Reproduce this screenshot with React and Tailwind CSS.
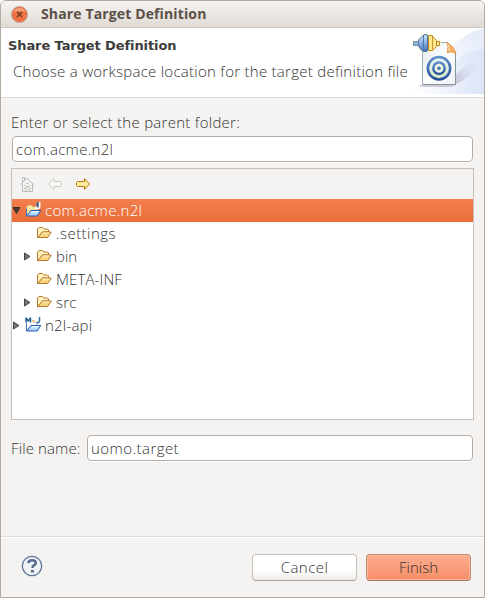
const BODY = "font-['Open_Sans','Noto_Sans',sans-serif] font-light text-[15px] text-[#333] whitespace-nowrap";

function Folder() {
  return (
    <svg width="16" height="16" viewBox="0 0 16 16" className="shrink-0" strokeLinejoin="round">
      <path d="M1.500 12.500V4L3 2.500h3.500L8 4h3.500l1 1v2H6.500L2 12.500z" fill="#fff0bd" stroke="#b5792b" />
      <path d="M1.800 12.500L6.300 7h9l-3.600 5.500z" fill="#f8d581" stroke="#b5792b" />
      <path d="M6.500 8h7" stroke="#fff3cc" />
    </svg>
  );
}

function Project({ maven }) {
  return (
    <svg width="17" height="17" viewBox="0 0 17 17" className="shrink-0" strokeLinejoin="round">
      <path d="M1.500 13.500V5.500L3 3.500h3.500L8 5h4v4H7l-5 4.500z" fill={maven ? "#fff" : "#fbe3a0"} stroke={maven ? "#9aa9c2" : "#e3c48a"} />
      <path d="M1.500 6.500v7.500" stroke="#3c6ebd" />
      <path d="M1.800 14L5.800 8.500h10l-3.500 5.500z" fill="#a9d0fb" stroke="#2d5fb0" />
      <path d="M6.500 9.500h7.500M5.500 10.800h7" stroke="#e5f3ff" />
      {maven ? (
        <>
          <path d="M0 0h17v5.500H0z" fill="#fff" />
          <path d="M1 5.500V1L3.300 4l2.200-3v4.500" fill="none" stroke="#235e93" strokeWidth="1.500" />
          <path d="M7.500 3l2.500 2.500" stroke="#d7b469" strokeWidth="1.700" />
          <path d="M14.500 0v4.200q0 1.300-1.300 1.300h-1.900" fill="none" stroke="#3a70a4" strokeWidth="1.500" />
        </>
      ) : (
        <>
          <path d="M12 0h2v5h-3V4z" fill="#4d6c9c" />
          <path d="M14.700 0v5q0 1.500-1.500 1.500h-2V4.500" fill="none" stroke="#fff" strokeWidth="1.600" />
        </>
      )}
    </svg>
  );
}

function Expander({ open }) {
  return (
    <svg width="9" height="9" viewBox="0 0 9 9" className="shrink-0">
      {open ? <path d="M1 1.500h7L4.500 7.500z" fill="#503b32" stroke="#38312d" /> : <path d="M1.500 1v7L7 4.500z" fill="#777" stroke="#444" />}
    </svg>
  );
}

function Row({ pad, icon, expander, selected, spacing, children }) {
  return (
    <div className={`flex h-[23px] items-center ${pad} ${selected ? "bg-gradient-to-b from-[#f37e4e] to-[#ea6d3a]" : ""}`}>
      <div className="flex w-[13px] shrink-0 pb-px">{expander && <Expander open={expander === "open"} />}</div>
      <div className="flex w-[20px] shrink-0 pb-px">{icon}</div>
      <span className={`${BODY} ${spacing} ${selected ? "text-white!" : ""}`}>{children}</span>
    </div>
  );
}

function Banner() {
  return (
    <svg width="78" height="66" viewBox="406 28 78 66" className="shrink-0">
      <defs>
        <linearGradient id="sweep" gradientUnits="userSpaceOnUse" x1="436" y1="75" x2="484" y2="50">
          <stop offset="0" stopColor="#fff" />
          <stop offset="1" stopColor="#e6ecfa" />
        </linearGradient>
        <linearGradient id="lower" gradientUnits="userSpaceOnUse" x1="412" y1="0" x2="484" y2="0">
          <stop offset="0" stopColor="#fff" />
          <stop offset="1" stopColor="#dbe4f7" />
        </linearGradient>
        <linearGradient id="page" x1="0" y1="0" x2="1" y2="1">
          <stop offset="0" stopColor="#dfe6e9" />
          <stop offset="0.5" stopColor="#fff" />
          <stop offset="1" stopColor="#edf0f6" />
        </linearGradient>
        <linearGradient id="shade" gradientUnits="userSpaceOnUse" x1="454" y1="84" x2="480" y2="64">
          <stop offset="0" stopColor="#aaa4bd" stopOpacity="0.6" />
          <stop offset="1" stopColor="#d3d5e8" stopOpacity="0" />
        </linearGradient>
        <linearGradient id="ring" x1="0" y1="0" x2="0" y2="1">
          <stop offset="0" stopColor="#5f8dc9" />
          <stop offset="1" stopColor="#234f9b" />
        </linearGradient>
        <linearGradient id="disc" x1="0" y1="0" x2="0" y2="1">
          <stop offset="0" stopColor="#e6f2ff" />
          <stop offset="1" stopColor="#d2e8bd" />
        </linearGradient>
        <linearGradient id="steel" x1="0" y1="0" x2="0" y2="1">
          <stop offset="0" stopColor="#d8eafa" />
          <stop offset="0.5" stopColor="#8ab0e0" />
          <stop offset="1" stopColor="#446fb0" />
        </linearGradient>
      </defs>
      <path d="M484 28q-17 4-30 16l-12 50h42z" fill="url(#sweep)" />
      <path d="M484 49q-18 1-30 14l-46 31h76z" fill="url(#lower)" />
      <path d="M456 84V74q12-11 27-18-8 20-27 28z" fill="url(#shade)" />
      <path d="M418 85h37l-3 2h-30z" fill="#bdb7c4" opacity="0.7" />
      <path d="M422.500 42.500h25l8 10v32h-33z" fill="url(#page)" stroke="#9ab0b6" />
      <path d="M422.500 84.500h33V53" fill="none" stroke="#829597" />
      <path d="M446.500 42q2.500 5 .5 11 5.500-2.500 9 1.500-1-8-9.500-12.500z" fill="#f6ae64" stroke="#dc8c46" strokeWidth="0.700" />
      <path d="M448 44q2 4 1 7" fill="none" stroke="#ffe0b3" />
      <circle cx="439" cy="68.200" r="11.200" fill="url(#disc)" stroke="url(#ring)" strokeWidth="2.500" />
      <circle cx="439" cy="68.200" r="5.700" fill="#eaf3e2" stroke="url(#ring)" strokeWidth="2.300" />
      <circle cx="439" cy="68.200" r="1.800" fill="#4479af" />
      <path d="M412 40.500h6l2-4 3-3h4l3 2h3l4 4h4v7h-4l-3 5h-4l-3 1h-4l-4-3-2-3h-5z" fill="#fff8d4" opacity="0.900" />
      <path d="M413.500 41.500h5v4h-5z" fill="#8fb2df" stroke="#6f8faf" />
      <path d="M418.500 40l3-3 2-2v17l-3-3-2-3z" fill="url(#steel)" stroke="#557eb5" />
      <rect x="423.500" y="34.500" width="4" height="17" rx="1.500" fill="url(#steel)" stroke="#4773ae" />
      <path d="M428.500 35.500h4l1 2 3 3v6l-3 3-1 1h-4z" fill="#ffe98d" stroke="#bc8724" />
      <path d="M432.500 36v14" stroke="#c99535" />
      <path d="M436.500 41.500h3v4h-3z" fill="#ffe7a0" stroke="#bc8724" />
    </svg>
  );
}

export default function App() {
  return (
    <div className="h-[598px] w-[485px] overflow-hidden bg-white">
      <div className="flex h-full w-full flex-col overflow-hidden rounded-t-[6px] border border-[#b6a99d] bg-[#f5f3f2]">
        <div className="flex h-[27px] shrink-0 items-center border-b border-[#cfc8c1] bg-gradient-to-b from-[#f6f4f2] to-[#dfdad4] pl-[10px]">
          <svg width="17" height="17" viewBox="0 0 17 17">
            <circle cx="8.500" cy="8.500" r="8" fill="#ef7144" stroke="#b9a79c" />
            <path d="M2.500 6a6.500 6.500 0 0 1 12 0q-6-2-12 0z" fill="#f6a17e" />
            <path d="M6 6l5 5M11 6l-5 5" stroke="#6b3825" strokeWidth="1.300" />
          </svg>
          <h1 className="ml-[13px] whitespace-nowrap font-['Open_Sans','Noto_Sans',sans-serif] text-[14px] leading-5 font-bold tracking-[0.130px] text-[#5c5148]">Share Target Definition</h1>
        </div>

        <header className="flex h-[70px] shrink-0 justify-between border-b border-[#dedad6] bg-white">
          <div className="flex flex-col pt-[10px] pl-[7px]">
            <h2 className="font-['DejaVu_Sans',sans-serif] text-[13px] leading-4 font-bold tracking-[-0.100px] whitespace-nowrap text-[#3c3c3c]">Share Target Definition</h2>
            <p className={`${BODY} mt-[7px] ml-[5px] leading-5 tracking-[0.270px]`}>Choose a workspace location for the target definition file</p>
          </div>
          <div className="-ml-5 flex"><Banner /></div>
        </header>

        <main className="flex h-[439px] shrink-0 flex-col border-b border-[#dedad6] pr-[10px] pl-[10px]">
          <label className={`${BODY} mt-[14px] leading-5 tracking-[0.280px]`}>Enter or select the parent folder:</label>
          <div className="mt-[4px] mr-px ml-px flex h-[26px] shrink-0 items-center rounded-[4px] border border-[#b6aca3] bg-white pl-[3px] shadow-[0_1px_0_#fff]">
            <span className={`${BODY} tracking-[0.300px]`}>com.acme.n2l</span>
          </div>
          <section className="mt-[6px] flex h-[252px] shrink-0 flex-col border border-[#c9c1b9] bg-white">
            <div className="flex h-[30px] shrink-0 items-center gap-[12px] bg-[#f5f3f2] pl-[7px]">
              <svg width="16" height="16" viewBox="0 0 16 16" fill="none" stroke="#bdbbb8">
                <path d="M1.500 8.500L8 2l6.500 6.500M3.500 7.500v8h10v-8M3.500 6V1.500h2V4M7 15v-4.500h3V15M7.500 7.500h2" />
                <path d="M5 9.500h1M11 9.500h1M5 12.500h1M11 12.500h1" />
              </svg>
              <svg width="16" height="16" viewBox="0 0 16 16" fill="#f8f7f5" stroke="#cdcac6" strokeLinejoin="round">
                <path d="M1.500 8L7 2.500V5.500h6.500l1 1v3l-1 1H7v3z" />
              </svg>
              <svg width="16" height="16" viewBox="0 0 16 16" fill="#ffeaa0" stroke="#b37a0d" strokeLinejoin="round">
                <path d="M14.500 8L9.500 2.500v3H2.500L1.500 6.500v3l1 1h7v3z" />
              </svg>
            </div>
            <Row pad="pl-0" expander="open" selected icon={<Project />} spacing="tracking-[0.300px]">com.acme.n2l</Row>
            <Row pad="pl-[11px]" icon={<Folder />} spacing="tracking-[0.450px]">.settings</Row>
            <Row pad="pl-[11px]" expander="closed" icon={<Folder />} spacing="">bin</Row>
            <Row pad="pl-[11px]" icon={<Folder />} spacing="tracking-[0.120px]">META-INF</Row>
            <Row pad="pl-[11px]" expander="closed" icon={<Folder />} spacing="tracking-[0.200px]">src</Row>
            <Row pad="pl-0" expander="closed" icon={<Project maven />} spacing="tracking-[0.200px]">n2l-api</Row>
          </section>
          <div className="mt-[15px] mr-px flex h-[26px] shrink-0 items-center">
            <label className={`${BODY} w-[76px] shrink-0 tracking-[0.120px]`}>File name:</label>
            <div className="flex h-full flex-1 items-center rounded-[4px] border border-[#b6aca3] bg-white pl-[3px] shadow-[0_1px_0_#fff]">
              <span className={`${BODY} tracking-[0.450px]`}>uomo.target</span>
            </div>
          </div>
        </main>

        <footer className="flex flex-1 items-center border-t border-white pr-[13px] pl-[20px]">
          <svg width="22" height="22" viewBox="0 0 22 22" className="mb-[3px]">
            <circle cx="11" cy="11" r="9.700" fill="#f1f2f5" stroke="#5d7492" strokeWidth="1.300" />
            <path d="M7.300 8.200q.3-3 3.900-3 3.500 0 3.500 2.700 0 1.500-1.800 2.500-1.400.8-1.400 2.500" fill="none" stroke="#566d91" strokeWidth="2.500" />
            <path d="M10 15h3v2.500h-3z" fill="#566d91" />
          </svg>
          <button className={`${BODY} ml-auto h-[27px] w-[105px] rounded-[4px] border border-[#c9c0b8] border-b-[#aaa097] bg-gradient-to-b from-white from-60% to-[#eeecea] pb-px tracking-[0.450px]`}>Cancel</button>
          <button className={`${BODY} ml-[9px] h-[27px] w-[105px] rounded-[4px] border border-[#bd8c75] border-b-[#a27660] bg-gradient-to-b from-[#fdae90] to-[#f58d66] pb-px shadow-[inset_0_0_0_1px_#fdb79b]`}>Finish</button>
        </footer>
      </div>
    </div>
  );
}
